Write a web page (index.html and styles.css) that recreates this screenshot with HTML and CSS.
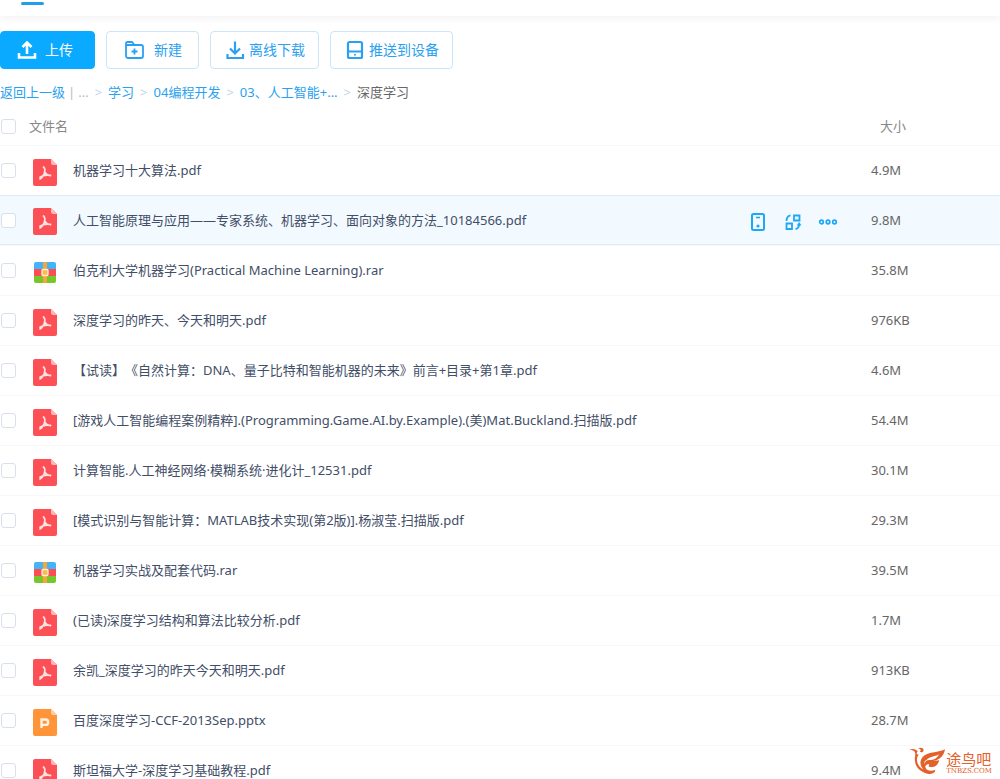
FILE: index.html
```html
<!DOCTYPE html>
<html lang="zh-CN">
<head>
<meta charset="utf-8">
<meta name="viewport" content="width=device-width, initial-scale=1">
<title>深度学习</title>
<link rel="stylesheet" href="styles.css">
</head>
<body>
<svg class="sprite" aria-hidden="true">
  <symbol id="pdf" viewBox="0 0 24 27">
    <path d="M2 0h16l6 6v19a2 2 0 0 1-2 2H2a2 2 0 0 1-2-2V2a2 2 0 0 1 2-2z" fill="#fd5056"/>
    <path d="M18 0l6 6h-4a2 2 0 0 1-2-2z" fill="#ffb9bb"/>
    <path d="M10.500 8c1.800 1.500 1.500 4.500.5 7-1 2.300-2.500 4.200-4 5M11.500 13c1 1.800 3.500 3.300 6 3.600M7 18.200c2.500-1.600 6-2.600 10.500-1.800" fill="none" stroke="#ffe4e4" stroke-width="1.700" stroke-linecap="round"/>
  </symbol>
  <symbol id="ppt" viewBox="0 0 24 27">
    <path d="M2 0h16l6 6v19a2 2 0 0 1-2 2H2a2 2 0 0 1-2-2V2a2 2 0 0 1 2-2z" fill="#ff9439"/>
    <path d="M18 0l6 6h-4a2 2 0 0 1-2-2z" fill="#ffd0a4"/>
    <path d="M8.500 19V10.500h4a2.700 2.700 0 0 1 0 5.400h-4" fill="none" stroke="#fff0e0" stroke-width="2.400"/>
  </symbol>
  <symbol id="rar" viewBox="0 0 24 27">
    <path d="M1 11V5a2 2 0 0 1 2-2h18a2 2 0 0 1 2 2v6z" fill="#41b4fa"/>
    <path d="M1 10h22v7H1z" fill="#fb4d54"/>
    <path d="M1 17h22v5a2 2 0 0 1-2 2H3a2 2 0 0 1-2-2z" fill="#76c72b"/>
    <path d="M10 3h4v21h-4z" fill="#f5a63a"/>
    <rect x="9" y="10.500" width="6" height="6" rx="1" fill="#ffb84f" stroke="#fff0d0" stroke-width="1.300"/>
  </symbol>
</svg>
<div class="app">
  <header class="top"><span class="tab-line"></span></header>
  <div class="toolbar">
    <button class="btn btn-primary" type="button">
      <svg class="btn-icon" viewBox="0 0 20 20"><path d="M10 14V3M5.500 7L10 2.500 14.500 7M2 13v4.500h16V13" fill="none" stroke="currentColor" stroke-width="2.600"/></svg>上传</button>
    <button class="btn btn-new" type="button">
      <svg class="btn-icon" viewBox="0 0 20 20"><path d="M2 16V3.500A1.500 1.500 0 0 1 3.500 2H8l2.500 3H17a2 2 0 0 1 2 2v9a2 2 0 0 1-2 2H4a2 2 0 0 1-2-2zM2 5h9M10.500 8.500v6M7.500 11.500h6" fill="none" stroke="currentColor" stroke-width="1.800"/></svg>新建</button>
    <button class="btn btn-down" type="button">
      <svg class="btn-icon" viewBox="0 0 20 20"><path d="M10 1.500V13M5 8.500l5 5 5-5M2.500 14v4h15.500v-4" fill="none" stroke="currentColor" stroke-width="2.200"/></svg>离线下载</button>
    <button class="btn btn-push" type="button">
      <svg class="btn-icon" viewBox="0 0 20 20"><rect x="3" y="2" width="14" height="16" rx="1.500" fill="none" stroke="currentColor" stroke-width="2.200"/><path d="M3 11.500h14" stroke="currentColor" stroke-width="2"/><circle cx="10" cy="14.800" r="1" fill="currentColor"/></svg>推送到设备</button>
  </div>
  <nav class="crumbs" aria-label="路径">
    <a href="#">返回上一级</a><span class="bar">|</span><span class="dots">...</span><span class="sep">&gt;</span><a href="#">学习</a><span class="sep">&gt;</span><a href="#">04编程开发</a><span class="sep">&gt;</span><a href="#">03、人工智能+...</a><span class="sep">&gt;</span><span class="current">深度学习</span>
  </nav>
  <table class="files">
    <colgroup><col class="col-check"><col class="col-type"><col><col class="col-actions"><col class="col-size"></colgroup>
    <thead>
      <tr><th class="check"><input type="checkbox" aria-label="全选"></th><th colspan="2">文件名</th><th></th><th class="size">大小</th></tr>
    </thead>
    <tbody>
      <tr><td class="check"><input type="checkbox" id="f1"></td><td class="type"><svg><use href="#pdf"/></svg></td><td class="name"><label for="f1">机器学习十大算法.pdf</label></td><td></td><td class="size">4.9M</td></tr>
      <tr class="active"><td class="check"><input type="checkbox" id="f2"></td><td class="type"><svg><use href="#pdf"/></svg></td><td class="name"><label for="f2">人工智能原理与应用——专家系统、机器学习、面向对象的方法_10184566.pdf</label></td><td>
        <div class="tools">
          <button type="button" aria-label="推送到设备"><svg viewBox="0 0 20 20"><rect x="4" y="2" width="12" height="16" rx="1.500" fill="none" stroke="currentColor" stroke-width="2"/><path d="M8 5.500h4" stroke="currentColor" stroke-width="1.600"/><circle cx="10" cy="14" r="1.600" fill="currentColor"/></svg></button>
          <button type="button" aria-label="分享"><svg viewBox="0 0 20 20"><path d="M11 3.500h5.500v5H11zM3.500 11.500H9v5.500H3.500zM3.500 9C3.500 5.500 4.500 4 7.500 3.300M12.500 17c3-.500 3.700-2 3.700-5" fill="none" stroke="currentColor" stroke-width="1.800"/><path d="M13.700 13.500l2.500-3.500 2.300 3.500z" fill="currentColor"/></svg></button>
          <button type="button" aria-label="更多"><svg viewBox="0 0 20 20"><g fill="none" stroke="currentColor" stroke-width="1.700"><circle cx="3.500" cy="10" r="1.800"/><circle cx="10" cy="10" r="1.800"/><circle cx="16.500" cy="10" r="1.800"/></g></svg></button>
        </div></td><td class="size">9.8M</td></tr>
      <tr><td class="check"><input type="checkbox" id="f3"></td><td class="type"><svg><use href="#rar"/></svg></td><td class="name"><label for="f3">伯克利大学机器学习(Practical Machine Learning).rar</label></td><td></td><td class="size">35.8M</td></tr>
      <tr><td class="check"><input type="checkbox" id="f4"></td><td class="type"><svg><use href="#pdf"/></svg></td><td class="name"><label for="f4">深度学习的昨天、今天和明天.pdf</label></td><td></td><td class="size">976KB</td></tr>
      <tr><td class="check"><input type="checkbox" id="f5"></td><td class="type"><svg><use href="#pdf"/></svg></td><td class="name"><label for="f5">【试读】《自然计算：DNA、量子比特和智能机器的未来》前言+目录+第1章.pdf</label></td><td></td><td class="size">4.6M</td></tr>
      <tr><td class="check"><input type="checkbox" id="f6"></td><td class="type"><svg><use href="#pdf"/></svg></td><td class="name"><label for="f6">[游戏人工智能编程案例精粹].(Programming.Game.AI.by.Example).(美)Mat.Buckland.扫描版.pdf</label></td><td></td><td class="size">54.4M</td></tr>
      <tr><td class="check"><input type="checkbox" id="f7"></td><td class="type"><svg><use href="#pdf"/></svg></td><td class="name"><label for="f7">计算智能.人工神经网络·模糊系统·进化计_12531.pdf</label></td><td></td><td class="size">30.1M</td></tr>
      <tr><td class="check"><input type="checkbox" id="f8"></td><td class="type"><svg><use href="#pdf"/></svg></td><td class="name"><label for="f8">[模式识别与智能计算：MATLAB技术实现(第2版)].杨淑莹.扫描版.pdf</label></td><td></td><td class="size">29.3M</td></tr>
      <tr><td class="check"><input type="checkbox" id="f9"></td><td class="type"><svg><use href="#rar"/></svg></td><td class="name"><label for="f9">机器学习实战及配套代码.rar</label></td><td></td><td class="size">39.5M</td></tr>
      <tr><td class="check"><input type="checkbox" id="f10"></td><td class="type"><svg><use href="#pdf"/></svg></td><td class="name"><label for="f10">(已读)深度学习结构和算法比较分析.pdf</label></td><td></td><td class="size">1.7M</td></tr>
      <tr><td class="check"><input type="checkbox" id="f11"></td><td class="type"><svg><use href="#pdf"/></svg></td><td class="name"><label for="f11">余凯_深度学习的昨天今天和明天.pdf</label></td><td></td><td class="size">913KB</td></tr>
      <tr><td class="check"><input type="checkbox" id="f12"></td><td class="type"><svg><use href="#ppt"/></svg></td><td class="name"><label for="f12">百度深度学习-CCF-2013Sep.pptx</label></td><td></td><td class="size">28.7M</td></tr>
      <tr><td class="check"><input type="checkbox" id="f13"></td><td class="type"><svg><use href="#pdf"/></svg></td><td class="name"><label for="f13">斯坦福大学-深度学习基础教程.pdf</label></td><td></td><td class="size">9.4M</td></tr>
    </tbody>
  </table>
  <div class="mark">
    <svg viewBox="0 0 38 28"><path d="M0 3c3-1 5 0 6 2 1 2 0 4 0 7 0 8 5 13 13 15 5 1 8-1 8-4-4 2-9 1-10-2-1-2 1-4 4-4-1 1-1 3 0 3 6 1 9-2 10-7-2 1-4 1-6 1 7-1 11-6 12-12C29 6 19 4 14 10c-4 5-2 10 1 13C9 20 6 13 10 7 8 8 7 6 9 4 6 1 3 1 0 3zM18 13c3-4 8-3 13-6-3 5-6 6-10 6-3 0-5 2-5 4-1-1 0-3 2-4zM9 1c2-1 6-1 6 2 0 2-3 3-4 1 2 0 1-3-2-3z" fill="#e4602a" fill-rule="evenodd"/></svg>
    <div class="mark-text"><span class="mark-name">途鸟吧</span><span class="mark-url">TNBZS.COM</span></div>
  </div>
</div>
</body>
</html>
```
FILE: styles.css
```css
* { box-sizing: border-box; }
body {
  margin: 0;
  background: #fff;
  color: #424e67;
  font: 13px/20px "Noto Sans", "Noto Sans CJK SC", sans-serif;
}
button, input { font: inherit; margin: 0; }
a { color: #2aa1f0; text-decoration: none; }
.sprite { position: absolute; width: 0; height: 0; }
.app { position: relative; height: 100vh; overflow: hidden; }

.top { height: 16px; padding: 2px 0 0 21px; box-shadow: 0 2px 8px rgba(0, 0, 0, 0.06); }
.tab-line { display: block; width: 23px; height: 3px; border-radius: 2px; background: #1f9fe8; }

.toolbar { display: flex; gap: 11px; padding-top: 15px; }
.btn {
  display: flex;
  align-items: center;
  height: 38px;
  border: 1px solid #c9e7fa;
  border-radius: 4px;
  background: #fff;
  color: #2aa1f0;
  font-size: 14px;
  white-space: nowrap;
}
.btn-icon { width: 20px; height: 20px; }
.btn-primary { gap: 8px; padding: 0 21px 0 16px; border-color: #09aaff; background: #09aaff; color: #fff; }
.btn-new { gap: 10px; padding: 0 16px 0 17px; }
.btn-down, .btn-push { gap: 4px; padding: 0 13px 0 14px; }

.crumbs { display: flex; align-items: center; height: 38px; padding-top: 7px; white-space: nowrap; }
.bar, .sep, .dots { color: #b4bcc8; }
.bar { margin: 0 3px; }
.sep { margin: 0 6px; color: #c3d3e6; }
.current { color: #666; }

.files { width: 100%; border-collapse: separate; border-spacing: 0; table-layout: fixed; }
.col-check { width: 29px; }
.col-type { width: 44px; }
.col-actions { width: 123px; }
.col-size { width: 129px; }
.files th, .files td { padding: 0; text-align: left; font-weight: 400; white-space: nowrap; }
.files th { height: 38px; color: #888; }
.files td { height: 50px; padding-bottom: 1px; border-top: 1px solid #f5f7fa; }
.files .size { color: #666; }
.files th.size { padding-left: 9px; color: #888; }
.files .type { padding: 3px 0 0 4px; }
.name { text-spacing-trim: space-all; }
.type svg { display: block; width: 24px; height: 27px; }
.files .active td { border-top-color: #dcecf8; border-bottom: 1px solid #dcecf8; padding-bottom: 0; background: #f3faff; }
.check input {
  appearance: none;
  display: block;
  width: 15px;
  height: 15px;
  margin-left: 1px;
  border: 1px solid #d9e0ea;
  border-radius: 3px;
  background: #fff;
}
.tools { display: flex; gap: 15px; padding-top: 4px; }
.tools button { padding: 0; border: 0; background: none; color: #1da7f5; }
.tools svg { display: block; width: 20px; height: 20px; }

.mark { position: absolute; right: 8px; bottom: 4px; display: flex; align-items: flex-end; color: #e4602a; }
.mark svg { width: 37px; height: 28px; }
.mark-text { display: flex; flex-direction: column; }
.mark-name { font-size: 15px; line-height: 15px; }
.mark-url { font: 7px/8px "DejaVu Serif", serif; }
```
